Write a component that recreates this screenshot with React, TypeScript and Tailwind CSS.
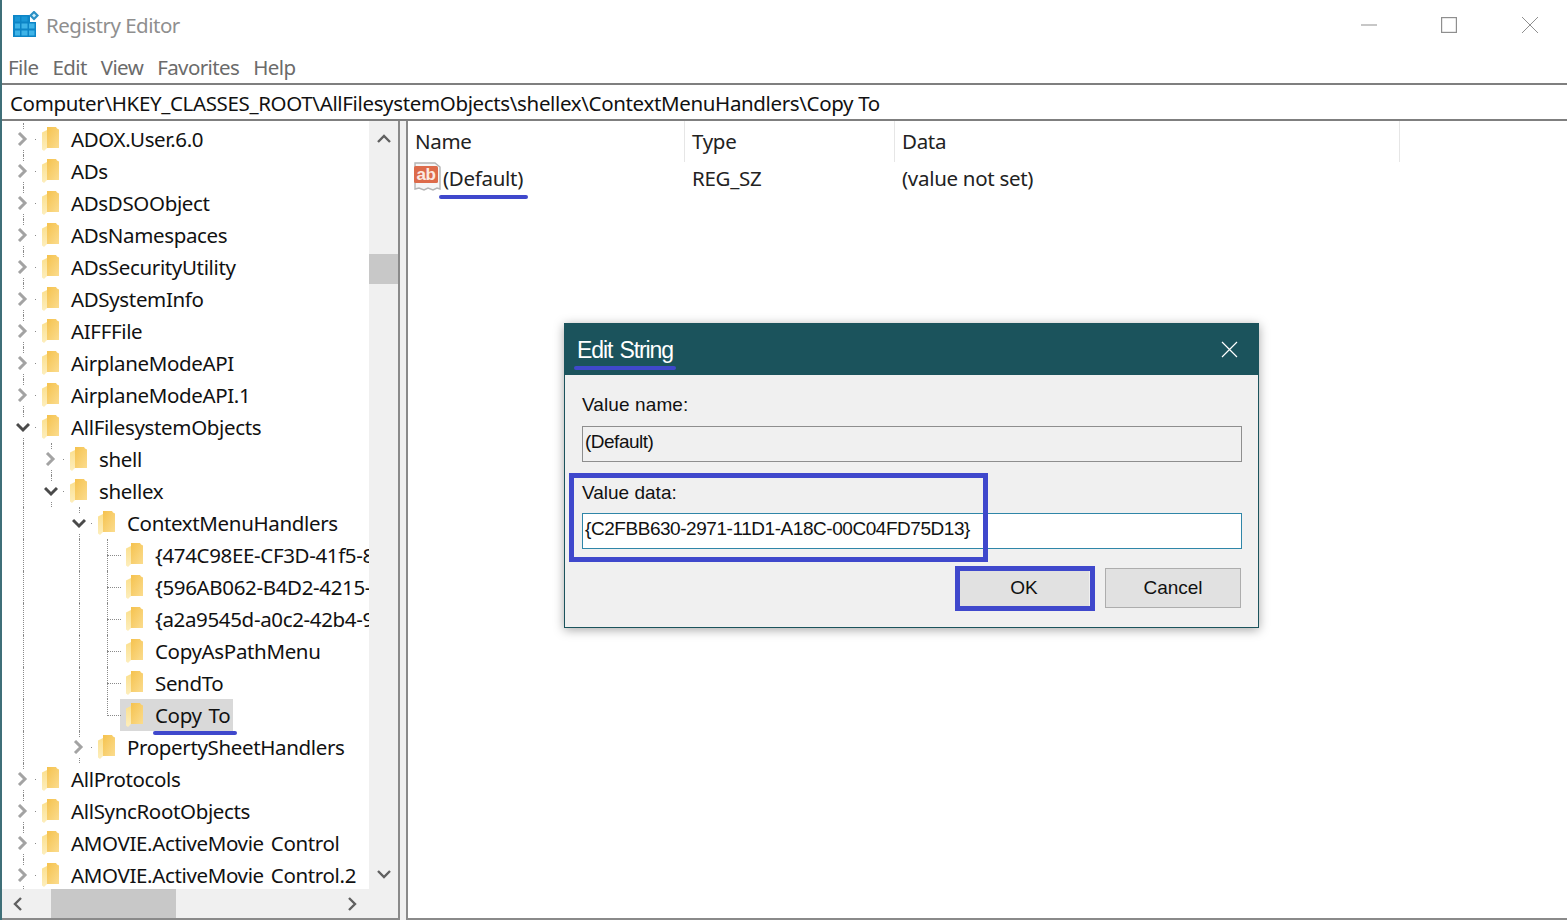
import React from 'react';

type Row = {
  depth: number;
  state: 'closed' | 'open' | 'leaf';
  label: string;
  guides: number[];
  selected?: boolean;
  lastLeaf?: boolean;
};

const rows: Row[] = [
  { depth: 0, state: 'closed', label: 'ADOX.User.6.0', guides: [0] },
  { depth: 0, state: 'closed', label: 'ADs', guides: [0] },
  { depth: 0, state: 'closed', label: 'ADsDSOObject', guides: [0] },
  { depth: 0, state: 'closed', label: 'ADsNamespaces', guides: [0] },
  { depth: 0, state: 'closed', label: 'ADsSecurityUtility', guides: [0] },
  { depth: 0, state: 'closed', label: 'ADSystemInfo', guides: [0] },
  { depth: 0, state: 'closed', label: 'AIFFFile', guides: [0] },
  { depth: 0, state: 'closed', label: 'AirplaneModeAPI', guides: [0] },
  { depth: 0, state: 'closed', label: 'AirplaneModeAPI.1', guides: [0] },
  { depth: 0, state: 'open', label: 'AllFilesystemObjects', guides: [0] },
  { depth: 1, state: 'closed', label: 'shell', guides: [0, 1] },
  { depth: 1, state: 'open', label: 'shellex', guides: [0, 1] },
  { depth: 2, state: 'open', label: 'ContextMenuHandlers', guides: [0, 2] },
  { depth: 3, state: 'leaf', label: '{474C98EE-CF3D-41f5-8', guides: [0, 2, 3] },
  { depth: 3, state: 'leaf', label: '{596AB062-B4D2-4215-', guides: [0, 2, 3] },
  { depth: 3, state: 'leaf', label: '{a2a9545d-a0c2-42b4-9', guides: [0, 2, 3] },
  { depth: 3, state: 'leaf', label: 'CopyAsPathMenu', guides: [0, 2, 3] },
  { depth: 3, state: 'leaf', label: 'SendTo', guides: [0, 2, 3] },
  { depth: 3, state: 'leaf', label: 'Copy To', guides: [0, 2], selected: true, lastLeaf: true },
  { depth: 2, state: 'closed', label: 'PropertySheetHandlers', guides: [0, 2] },
  { depth: 0, state: 'closed', label: 'AllProtocols', guides: [0] },
  { depth: 0, state: 'closed', label: 'AllSyncRootObjects', guides: [0] },
  { depth: 0, state: 'closed', label: 'AMOVIE.ActiveMovie Control', guides: [0] },
  { depth: 0, state: 'closed', label: 'AMOVIE.ActiveMovie Control.2', guides: [0] },
];

const FolderIcon = () => (
  <svg width="17" height="24" viewBox="0 0 17 24" className="shrink-0">
    <defs>
      <linearGradient id="foldBack" x1="0" y1="0" x2="1" y2="1">
        <stop offset="0" stopColor="#f5c24e" />
        <stop offset="1" stopColor="#fbdc8e" />
      </linearGradient>
      <linearGradient id="foldFlap" x1="0" y1="0" x2="0" y2="1">
        <stop offset="0" stopColor="#fbe08f" />
        <stop offset="1" stopColor="#fdeebd" />
      </linearGradient>
    </defs>
    <path d="M5 0h9l1 1.5 2 1V21H5z" fill="url(#foldBack)" />
    <path d="M0 5.5 5 3v18l-3 3-2-1.5z" fill="url(#foldFlap)" />
  </svg>
);

const Chevron = ({
  dir,
  color = '#a6a6a6',
  weight = 2.4,
}: {
  dir: 'right' | 'down' | 'up' | 'left';
  color?: string;
  weight?: number;
}) => {
  const d = {
    right: 'M3 1l6 6-6 6',
    left: 'M10 1L4 7l6 6',
    down: 'M1 4l6 6 6-6',
    up: 'M1 10l6-6 6 6',
  }[dir];
  return (
    <svg width="14" height="14" viewBox="0 0 14 14" fill="none" stroke={color} strokeWidth={weight}>
      <path d={d} />
    </svg>
  );
};

const TreeRow = ({ row }: { row: Row }) => (
  <div className="flex h-8 shrink-0 items-center pl-[7px]">
    {[0, 1, 2, 3].slice(0, row.depth + 1).map((level) => {
      const isOwn = level === row.depth;
      const hasGuide = row.guides.includes(level);
      return (
        <div key={level} className="relative flex h-8 w-7 shrink-0 items-center justify-center">
          {hasGuide && (
            <div className="absolute bottom-0 left-[14px] top-0 border-l border-dotted border-[#8a8a8a]" />
          )}
          {row.lastLeaf && level === 3 && (
            <div className="absolute left-[14px] top-0 h-[17px] border-l border-dotted border-[#8a8a8a]" />
          )}
          {isOwn && row.state === 'leaf' && (
            <div className="absolute left-[14px] top-[16px] w-[14px] border-t border-dotted border-[#8a8a8a]" />
          )}
          {isOwn && row.state !== 'leaf' && (
            <div className="relative flex h-5 w-5 items-center justify-center bg-white">
              <Chevron
                dir={row.state === 'open' ? 'down' : 'right'}
                color={row.state === 'open' ? '#4a4a4a' : '#a3a3a3'}
                weight={3}
              />
            </div>
          )}
          {isOwn && row.state !== 'leaf' && (
            <div className="absolute left-[26px] top-[16px] h-px w-px bg-[#8a8a8a]" />
          )}
        </div>
      );
    })}
    <div
      className={
        row.selected
          ? 'flex h-8 items-center bg-[#d9d9d9] pl-[6px] pr-[3px] -ml-[1px]'
          : 'flex h-8 items-center pl-[5px]'
      }
    >
      <FolderIcon />
      <span className="ml-3 whitespace-nowrap text-[20.5px] leading-8 tracking-[-0.35px] text-[#111] [word-spacing:2px]">
        {row.label}
      </span>
    </div>
  </div>
);

const AbIcon = () => (
  <svg width="30" height="32" viewBox="0 0 30 32" className="shrink-0">
    <path
      d="M3 1h20l5 4v22l-3-1-4 2-5-2-4 2-5-2-4 1z"
      fill="#f6f6f6"
      stroke="#b4b4b4"
      strokeWidth="1.4"
    />
    <rect x="2" y="4" width="24" height="17" rx="1.5" fill="#dd6b4a" />
    <text
      x="14"
      y="18"
      textAnchor="middle"
      fontSize="17"
      fontWeight="700"
      fill="#fbe9e2"
      fontFamily="Liberation Sans, sans-serif"
    >
      ab
    </text>
  </svg>
);

const RegeditIcon = () => (
  <svg width="28" height="28" viewBox="0 0 28 28" className="shrink-0">
    <path d="M1 4h17v7h6v15H1z" fill="#0d85c6" />
    <g fill="#3fb4e8">
      <rect x="9.5" y="5.5" width="6" height="5" fill="#1a97d6" />
      <rect x="3" y="5.5" width="5" height="5" fill="#1a97d6" />
      <rect x="3" y="12.5" width="5" height="5" />
      <rect x="9.5" y="12.5" width="6" height="5" />
      <rect x="17" y="12.5" width="5.5" height="5" />
      <rect x="3" y="19.5" width="5" height="5" />
      <rect x="9.5" y="19.5" width="6" height="5" />
      <rect x="17" y="19.5" width="5.5" height="5" />
    </g>
    <path d="M22 -0.5l5 5-5 5-5-5z" fill="#2a8fc4" />
    <path d="M22 2.5l2 2-2 2-2-2z" fill="#cfeefb" />
  </svg>
);

const Column = ({ label, width }: { label: string; width: string }) => (
  <div
    className={`${width} flex h-[41px] shrink-0 items-center border-r border-[#e6e6e6] pl-[7px] text-[20.5px] tracking-[-0.3px] text-[#222]`}
  >
    {label}
  </div>
);

const dialogFont = "font-['Liberation_Sans',sans-serif]";

export default function App() {
  return (
    <div className="flex h-[920px] w-[1567px] flex-col overflow-hidden border-l-2 border-[#3f6f78] bg-white font-['Noto_Sans',sans-serif]">
      <div className="flex h-[50px] shrink-0 items-center pl-[10px]">
        <RegeditIcon />
        <span className="ml-[6px] pt-[1px] text-[20.5px] tracking-[-0.5px] text-[#8f8f8f]">Registry Editor</span>
        <div className="ml-auto flex items-center pr-[29px] text-[#8f8f8f]">
          <svg width="16" height="16" viewBox="0 0 16 16" stroke="currentColor" strokeWidth="1" className="mr-[64px]">
            <path d="M0 8h16" />
          </svg>
          <svg width="16" height="16" viewBox="0 0 16 16" fill="none" stroke="currentColor" strokeWidth="1.2" className="mr-[65px]">
            <rect x="0.6" y="0.6" width="14.8" height="14.8" />
          </svg>
          <svg width="16" height="16" viewBox="0 0 16 16" stroke="currentColor" strokeWidth="1">
            <path d="M0 0l16 16M16 0L0 16" />
          </svg>
        </div>
      </div>
      <div className="flex h-[33px] shrink-0 items-center gap-[14px] pl-[6px] pt-[1px] text-[20.5px] tracking-[-0.6px] text-[#6b6b6b]">
        <span>File</span>
        <span>Edit</span>
        <span>View</span>
        <span>Favorites</span>
        <span>Help</span>
      </div>
      <div className="flex h-[38px] shrink-0 items-center border-y-2 border-[#7f7f7f] pl-[8px] pt-[2px] text-[20.5px] tracking-[-0.35px] text-[#111]">
        Computer\HKEY_CLASSES_ROOT\AllFilesystemObjects\shellex\ContextMenuHandlers\Copy To
      </div>

      <div className="relative flex min-h-0 flex-1">
        <div className="flex w-[398px] shrink-0 flex-col border-r-2 border-b-2 border-[#8a8a8a] bg-[#f0f0f0]">
          <div className="flex min-h-0 flex-1">
            <div className="flex min-w-0 flex-1 flex-col overflow-hidden bg-white pt-[2px]">
              {rows.map((row) => (
                <TreeRow key={row.label} row={row} />
              ))}
            </div>
            <div className="flex w-[29px] shrink-0 flex-col items-center bg-[#f0f0f0] pt-[11px]">
              <Chevron dir="up" color="#606060" />
              <div className="mt-[108px] h-[30px] w-full bg-[#c8c8c8]" />
              <div className="mt-auto pb-[8px]">
                <Chevron dir="down" color="#606060" />
              </div>
            </div>
          </div>
          <div className="flex h-[29px] shrink-0 items-center bg-[#f0f0f0]">
            <div className="flex w-[49px] pl-[9px]">
              <Chevron dir="left" color="#606060" />
            </div>
            <div className="h-full w-[125px] bg-[#c8c8c8]" />
            <div className="ml-auto pr-[38px]">
              <Chevron dir="right" color="#606060" />
            </div>
          </div>
        </div>

        <div className="w-[6px] shrink-0 bg-[#f0f0f0]" />

        <div className="flex min-w-0 flex-1 flex-col border-b-2 border-l-2 border-[#8a8a8a]">
          <div className="flex">
            <Column label="Name" width="w-[277px]" />
            <Column label="Type" width="w-[210px]" />
            <Column label="Data" width="w-[505px]" />
          </div>
          <div className="flex h-[32px] items-center pl-[4px] text-[20.5px] tracking-[-0.3px] text-[#222]">
            <AbIcon />
            <span className="w-[250px] shrink-0 pl-px">(Default)</span>
            <span className="w-[210px] shrink-0">REG_SZ</span>
            <span>(value not set)</span>
          </div>
        </div>

        {/* blue markup drawn over the screenshot */}
        <div className="absolute left-[151px] top-[610px] h-[4px] w-[84px] rounded-full bg-[#3f48cc]" />
        <div className="absolute left-[437px] top-[74px] h-[4px] w-[89px] rounded-full bg-[#3f48cc]" />

        <div
          className={`absolute left-[562px] top-[202px] flex h-[305px] w-[695px] flex-col border border-[#1b535c] bg-[#f0f0f0] shadow-[0_2px_10px_rgba(0,0,0,0.35)] ${dialogFont}`}
        >
          <div className="relative flex h-[51px] shrink-0 items-center justify-between bg-[#1b535c] pl-[12px] pr-[20px] text-white">
            <span className="pt-[2px] text-[23px] tracking-[-1.1px] [word-spacing:2px]">Edit String</span>
            <svg width="17" height="17" viewBox="0 0 17 17" stroke="#fff" strokeWidth="1.2">
              <path d="M1 1l15 15M16 1L1 16" />
            </svg>
            <div className="absolute left-[9px] top-[42px] h-[4px] w-[102px] rounded-full bg-[#3f48cc]" />
          </div>
          <div className="flex flex-1 flex-col pl-[17px] pr-[16px] pt-[19px] text-[19px] text-[#111]">
            <span className="h-[22px] leading-[22px] tracking-[0.1px]">Value name:</span>
            <div className="mt-[10px] flex h-[36px] items-center border border-[#8e8e8e] pb-[4px] pl-[2px] tracking-[-0.5px]">
              (Default)
            </div>
            <span className="mt-[20px] h-[22px] leading-[22px]">Value data:</span>
            <div className="mt-[9px] flex h-[36px] items-center border border-[#2f86a8] bg-white pb-[4px] pl-[2px] tracking-[-0.45px]">
              {'{C2FBB630-2971-11D1-A18C-00C04FD75D13}'}
            </div>
            <div className="mt-[19px] flex justify-end gap-[16px] pr-px">
              <div className="flex h-[40px] w-[130px] items-center justify-center bg-[#e1e1e1]">OK</div>
              <div className="flex h-[40px] w-[136px] items-center justify-center border border-[#adadad] bg-[#e1e1e1]">
                Cancel
              </div>
            </div>
          </div>
          <div className="absolute left-[4px] top-[149px] h-[89px] w-[419px] border-[5px] border-[#3f48cc]" />
          <div className="absolute left-[390px] top-[242px] h-[45px] w-[140px] border-[5px] border-[#3f48cc]" />
        </div>
      </div>
    </div>
  );
}
